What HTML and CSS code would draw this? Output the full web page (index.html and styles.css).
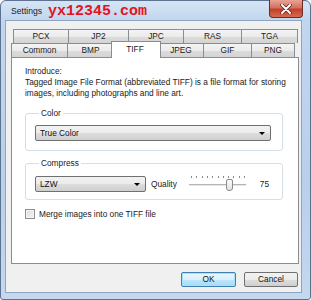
FILE: index.html
```html
<!DOCTYPE html>
<html lang="en">
<head>
  <meta charset="UTF-8">
  <title>Settings</title>
  <link rel="stylesheet" href="styles.css">
</head>
<body>
  <div class="window">
    <div class="titlebar">
      <span class="title">Settings</span>
      <span class="mark">yx12345.com</span>
      <div class="close">
        <svg width="12" height="10" viewBox="0 0 12 10">
          <path d="M2 1 L10 9 M10 1 L2 9" stroke="#5a1c17" stroke-width="3.4" stroke-linecap="round"/>
          <path d="M2 1 L10 9 M10 1 L2 9" stroke="#fff" stroke-width="2" stroke-linecap="round"/>
        </svg>
      </div>
    </div>

    <div class="client">
      <div class="tab-row back">
        <div class="tab" style="width:56px">PCX</div>
        <div class="tab" style="width:61px">JP2</div>
        <div class="tab" style="width:56px">JPC</div>
        <div class="tab" style="width:59px">RAS</div>
        <div class="tab" style="width:57px">TGA</div>
      </div>
      <div class="tab-row front">
        <div class="tab" style="width:57px">Common</div>
        <div class="tab" style="width:47px">BMP</div>
        <div class="tab active" style="width:50px">TIFF</div>
        <div class="tab" style="width:46px">JPEG</div>
        <div class="tab" style="width:49px">GIF</div>
        <div class="tab" style="width:44px">PNG</div>
      </div>

      <div class="panel">
        <div class="intro">Introduce:</div>
        <div class="intro">Tagged Image File Format (abbreviated TIFF) is a file format for storing<br>images, including photographs and line art.</div>

        <fieldset class="group color-group">
          <legend>Color</legend>
          <div class="combo wide"><span>True Color</span><i class="arrow"></i></div>
        </fieldset>

        <fieldset class="group compress-group">
          <legend>Compress</legend>
          <div class="compress-row">
            <div class="combo short"><span>LZW</span><i class="arrow"></i></div>
            <span class="label">Quality</span>
            <div class="slider">
              <div class="ticks"></div>
              <div class="track"></div>
              <div class="thumb"></div>
            </div>
            <span class="value">75</span>
          </div>
        </fieldset>

        <div class="check-row">
          <div class="checkbox"></div>
          <span>Merge images into one TIFF file</span>
        </div>
      </div>

      <div class="buttons">
        <div class="btn default">OK</div>
        <div class="btn">Cancel</div>
      </div>
    </div>
  </div>
</body>
</html>
```

FILE: styles.css
```css
* {
  box-sizing: border-box;
}
body {
  margin: 0;
  background: #fff;
  font-family: "Liberation Sans", Arial, sans-serif;
  font-size: 8.3px;
  color: #000;
}
.window {
  width: 311px;
  height: 300px;
  border: 1px solid #5d7290;
  border-radius: 6px 6px 3px 3px;
  padding: 0 8px 7px 4px;
  background: linear-gradient(180deg, #d6e5f5 0px, #c2d7ee 18px, #b9d0ea 60%, #c4d8ee 100%);
}
.titlebar {
  height: 19px;
  display: flex;
  align-items: center;
  position: relative;
}
.title {
  margin-left: 6px;
  font-size: 8.6px;
  color: #1b1b1b;
}
.mark {
  margin-left: 6px;
  margin-top: 1px;
  font-family: "Liberation Mono", "Courier New", monospace;
  font-weight: bold;
  font-size: 15px;
  color: #e3141f;
}
.close {
  position: absolute;
  right: -1px;
  top: -1px;
  width: 34px;
  height: 18px;
  border: 1px solid #6e2a24;
  border-top: none;
  border-radius: 0 0 4px 4px;
  background: linear-gradient(180deg, #e8a495 0%, #d4715f 45%, #c2402c 55%, #d66a4f 100%);
  display: flex;
  align-items: center;
  justify-content: center;
}
.client {
  height: 273px;
  border: 1px solid #8ea4c0;
  background: #f0f0f0;
  padding: 8px 2px 0 5px;
}
.tab-row {
  display: flex;
  height: 14px;
}
.tab-row.back {
  margin-left: 2px;
}
.tab {
  height: 14px;
  margin-right: -1px;
  border: 1px solid #898c95;
  border-bottom: none;
  background: linear-gradient(180deg, #f4f4f4 0%, #ebebeb 50%, #dcdcdc 51%, #d4d4d4 100%);
  text-align: center;
  line-height: 13px;
  font-size: 8.3px;
  color: #1a1a1a;
}
.tab.active {
  position: relative;
  z-index: 2;
  height: 17px;
  margin: -2px -3px -1px -2px;
  padding-right: 2px;
  background: #fff;
  line-height: 14px;
}
.panel {
  position: relative;
  z-index: 1;
  width: 288px;
  height: 207px;
  background: #fff;
  border: 1px solid #898c95;
  padding: 8px 0 0 13px;
}
.intro {
  line-height: 11px;
  color: #1a1a1a;
  white-space: nowrap;
}
.group {
  width: 258px;
  margin: 0;
  border: 1px solid #d5dfe5;
  border-radius: 3px;
  padding: 6px 11px 9px 9px;
}
.group legend {
  margin-left: 4px;
  padding: 0 2px;
  line-height: 11px;
  color: #1a1a1a;
}
.color-group {
  margin-top: 9px;
}
.compress-group {
  margin-top: 7px;
  padding-top: 7px;
  padding-bottom: 7px;
}
.combo {
  position: relative;
  height: 16px;
  border: 1px solid #707070;
  border-radius: 2px;
  background: linear-gradient(180deg, #f2f2f2 0%, #ebebeb 50%, #dddddd 51%, #cfcfcf 100%);
  line-height: 14px;
  padding-left: 4px;
  color: #111;
}
.combo.wide {
  width: 236px;
}
.combo.short {
  width: 111px;
}
.arrow {
  position: absolute;
  right: 5px;
  top: 6px;
  border-left: 3px solid transparent;
  border-right: 3px solid transparent;
  border-top: 3px solid #000;
}
.compress-row {
  display: flex;
  align-items: center;
}
.compress-row .label {
  margin-left: 5px;
  color: #1a1a1a;
}
.slider {
  position: relative;
  width: 57px;
  height: 16px;
  margin-left: 12px;
}
.ticks {
  position: absolute;
  left: 2px;
  top: 0;
  width: 54px;
  height: 2px;
  background: repeating-linear-gradient(90deg, #8a8a8a 0 1px, transparent 1px 5.3px);
}
.track {
  position: absolute;
  left: 0;
  right: 0;
  top: 8px;
  height: 2px;
  border-top: 1px solid #b5b5b5;
  border-bottom: 1px solid #e6e6e6;
}
.thumb {
  position: absolute;
  left: 37px;
  top: 3px;
  width: 7px;
  height: 12px;
  border: 1px solid #8a8a8a;
  border-radius: 2px 2px 3px 3px;
  background: linear-gradient(180deg, #fbfbfb, #e3e3e3);
}
.compress-row .value {
  margin-left: 14px;
  color: #1a1a1a;
}
.check-row {
  display: flex;
  align-items: center;
  margin-top: 9px;
}
.checkbox {
  width: 10px;
  height: 10px;
  border: 1px solid #8e8f8f;
  background: linear-gradient(135deg, #dcdcdc, #f6f6f6);
  box-shadow: inset 0 0 0 1px #f4f4f4;
  margin-right: 4px;
}
.check-row span {
  color: #1a1a1a;
}
.buttons {
  display: flex;
  justify-content: flex-end;
  gap: 8px;
  margin-top: 8px;
  margin-right: 1px;
}
.btn {
  width: 54px;
  height: 15px;
  border: 1px solid #707070;
  border-radius: 2px;
  background: linear-gradient(180deg, #f2f2f2 0%, #ebebeb 50%, #dddddd 51%, #cfcfcf 100%);
  text-align: center;
  line-height: 13px;
  color: #111;
}
.btn.default {
  width: 55px;
  border-color: #3c7fb1;
  background: linear-gradient(180deg, #eaf6fd 0%, #d9f0fc 50%, #bee6fd 51%, #a7d9f5 100%);
  box-shadow: inset 0 0 0 1px #a8e1fb;
}
```
